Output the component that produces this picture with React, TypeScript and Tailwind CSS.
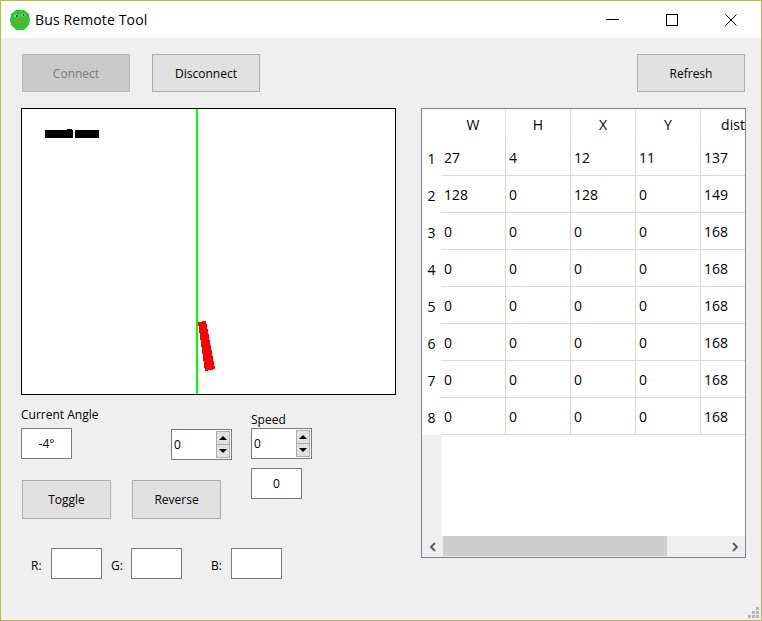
import React from "react";

const rows = [
  ["27", "4", "12", "11", "137"],
  ["128", "0", "128", "0", "149"],
  ["0", "0", "0", "0", "168"],
  ["0", "0", "0", "0", "168"],
  ["0", "0", "0", "0", "168"],
  ["0", "0", "0", "0", "168"],
  ["0", "0", "0", "0", "168"],
  ["0", "0", "0", "0", "168"],
];

const headers = ["W", "H", "X", "Y", "dist"];

function PushButton({ label, disabled, className }: { label: string; disabled?: boolean; className: string }) {
  return (
    <button
      className={`border-[1px] pt-[1px] text-[12px] ${
        disabled ? "bg-[#cacaca] border-[#b8b8b8] text-[#787878]" : "bg-[#e1e1e1] border-[#adadad] text-black"
      } ${className}`}
    >
      {label}
    </button>
  );
}

function ValueBox({ value, className }: { value?: string; className?: string }) {
  return (
    <div className={`w-[51px] h-[31px] shrink-0 bg-white border border-[#7a7a7a] flex items-center justify-center text-[12px] ${className ?? ""}`}>
      {value}
    </div>
  );
}

function SpinBox({ className }: { className?: string }) {
  return (
    <div className={`w-[61px] h-[31px] shrink-0 bg-white border border-[#7a7a7a] flex items-center justify-between pl-[2px] pr-[1px] text-[12px] ${className ?? ""}`}>
      <span>0</span>
      <div className="w-[14px] h-[27px] border border-[#adadad] bg-[#e1e1e1] flex flex-col">
        <div className="flex-1 flex items-center justify-center border-b border-[#adadad]">
          <svg width="8" height="4" viewBox="0 0 8 4"><path d="M4 0 L8 4 H0 Z" fill="#000" /></svg>
        </div>
        <div className="flex-1 flex items-center justify-center">
          <svg width="8" height="4" viewBox="0 0 8 4"><path d="M0 0 H8 L4 4 Z" fill="#000" /></svg>
        </div>
      </div>
    </div>
  );
}

function AppIcon() {
  return (
    <svg width="20" height="20" viewBox="0 0 20 20">
      <path d="M6 0 H14 L19 4 L20 10 L19 15 L14 20 H6 L1 15 L0 10 L1 4 Z" fill="#22cc33" />
      <ellipse cx="6.5" cy="6" rx="2.6" ry="1.6" fill="#a9cfa0" />
      <ellipse cx="13" cy="5" rx="2.6" ry="1.6" fill="#a9cfa0" />
      <circle cx="7" cy="6" r="0.9" fill="#222" />
      <circle cx="13.5" cy="5" r="0.9" fill="#222" />
      <path d="M3 13 C8 13 13 12 18 9" stroke="#e8701a" strokeWidth="2" fill="none" />
    </svg>
  );
}

function Track() {
  return (
    <div className="w-[375px] h-[287px] bg-white border border-black">
      {/* drawing of the lane, obstacles and the bus */}
      <svg width="373" height="285" viewBox="0 0 373 285" className="block" shapeRendering="crispEdges">
        <rect x="23" y="21" width="28" height="8" fill="#000" />
        <rect x="45" y="20" width="5" height="1" fill="#000" />
        <rect x="53" y="21" width="24" height="8" fill="#000" />
        <polygon points="176,213 184,212 193,260 183,262" fill="#ff0000" />
        <rect x="174" y="0" width="2" height="285" fill="#00ff00" />
      </svg>
    </div>
  );
}

function DataTable() {
  return (
    <div className="w-[325px] h-[450px] border border-[#82828c] bg-white flex flex-col">
      <div className="flex-1 flex min-h-0 overflow-hidden">
        <div className="w-[19px] shrink-0 bg-[#efefef] flex flex-col">
          <div className="h-[30px] bg-white" />
          {rows.map((_, i) => (
            <div key={i} className="h-[37px] bg-white flex items-center justify-center text-[14px] pt-[2px]">
              {i + 1}
            </div>
          ))}
        </div>
        <div className="flex-1 min-w-0 overflow-hidden">
          <div className="flex h-[30px] w-[340px]">
            {headers.map((h) => (
              <div key={h} className="w-[65px] shrink-0 border-r border-[#e4e4e4] flex items-center justify-center text-[14px]">
                {h}
              </div>
            ))}
          </div>
          {rows.map((row, i) => (
            <div key={i} className="flex h-[37px] w-[340px]">
              {row.map((cell, j) => (
                <div key={j} className="w-[65px] shrink-0 border-r border-b border-[#d8d8d8] flex items-center pl-[3px] text-[14px]">
                  {cell}
                </div>
              ))}
            </div>
          ))}
        </div>
      </div>
      <div className="h-[21px] bg-[#efefef] flex items-stretch">
        <div className="w-[21px] flex items-center justify-center">
          <svg width="8" height="10" viewBox="0 0 8 10"><path d="M6 1 L2 5 L6 9" stroke="#606060" strokeWidth="2" fill="none" /></svg>
        </div>
        <div className="w-[224px] mb-[1px] bg-[#cdcdcd]" />
        <div className="flex-1 flex items-center justify-end pr-[6px]">
          <svg width="8" height="10" viewBox="0 0 8 10"><path d="M2 1 L6 5 L2 9" stroke="#606060" strokeWidth="2" fill="none" /></svg>
        </div>
      </div>
    </div>
  );
}

export default function App() {
  return (
    <div
      className="relative w-[762px] h-[621px] border border-[#b8bb3e] bg-[#efefef] flex flex-col text-black"
      style={{ fontFamily: '"Open Sans", "Noto Sans", sans-serif' }}
    >
      {/* title bar */}
      <div className="h-[37px] shrink-0 bg-white flex items-center pl-[9px]">
        <AppIcon />
        <span className="ml-[5px] text-[14px] tracking-[0.13px]">Bus Remote Tool</span>
        <div className="ml-auto flex items-center h-full pr-[1px]">
          <div className="w-[59px] flex justify-center">
            <svg width="13" height="1" viewBox="0 0 13 1"><rect width="13" height="1" fill="#000" /></svg>
          </div>
          <div className="w-[59px] flex justify-center">
            <svg width="12" height="12" viewBox="0 0 12 12"><rect x="0.5" y="0.5" width="11" height="11" fill="none" stroke="#000" /></svg>
          </div>
          <div className="w-[59px] flex justify-center">
            <svg width="12" height="12" viewBox="0 0 12 12"><path d="M0.5 0.5 L11.5 11.5 M11.5 0.5 L0.5 11.5" stroke="#000" fill="none" /></svg>
          </div>
        </div>
      </div>

      {/* toolbar */}
      <div className="flex pl-[21px] pr-[16px] pt-[16px] gap-[22px]">
        <PushButton label="Connect" disabled className="w-[108px] h-[38px]" />
        <PushButton label="Disconnect" className="w-[108px] h-[38px]" />
        <PushButton label="Refresh" className="w-[108px] h-[38px] ml-auto" />
      </div>

      <div className="flex pl-[20px] pt-[16px] gap-[25px]">
        <div className="w-[375px] flex flex-col">
          <Track />
          <div className="flex">
            <div className="w-[230px] shrink-0">
              <div className="flex items-start">
                <div className="w-[150px]">
                  <div className="text-[12px] leading-[16px] mt-[12px] mb-[5px]">Current Angle</div>
                  <ValueBox value="-4°" />
                </div>
                <SpinBox className="mt-[34px]" />
              </div>
              <div className="flex gap-[21px] pl-[1px] mt-[20px]">
                <PushButton label="Toggle" className="w-[89px] h-[39px]" />
                <PushButton label="Reverse" className="w-[89px] h-[39px]" />
              </div>
              <div className="flex items-center w-max mt-[29px] text-[12px]">
                <span className="ml-[10px] w-[20px] pt-[4px]">R:</span>
                <ValueBox />
                <span className="ml-[9px] w-[20px] pt-[4px]">G:</span>
                <ValueBox />
                <span className="ml-[29px] w-[20px] pt-[4px]">B:</span>
                <ValueBox />
              </div>
            </div>
            <div>
              <div className="text-[12px] leading-[16px] mt-[17px]">Speed</div>
              <SpinBox />
              <ValueBox value="0" className="mt-[9px]" />
            </div>
          </div>
        </div>
        <DataTable />
      </div>

      {/* size grip */}
      <svg width="11" height="11" viewBox="0 0 11 11" className="absolute right-[2px] bottom-[2px]">
        <g fill="#b5b5b5">
          <rect x="8" y="0" width="3" height="3" />
          <rect x="4" y="4" width="3" height="3" />
          <rect x="8" y="4" width="3" height="3" />
          <rect x="0" y="8" width="3" height="3" />
          <rect x="4" y="8" width="3" height="3" />
          <rect x="8" y="8" width="3" height="3" />
        </g>
      </svg>
    </div>
  );
}
